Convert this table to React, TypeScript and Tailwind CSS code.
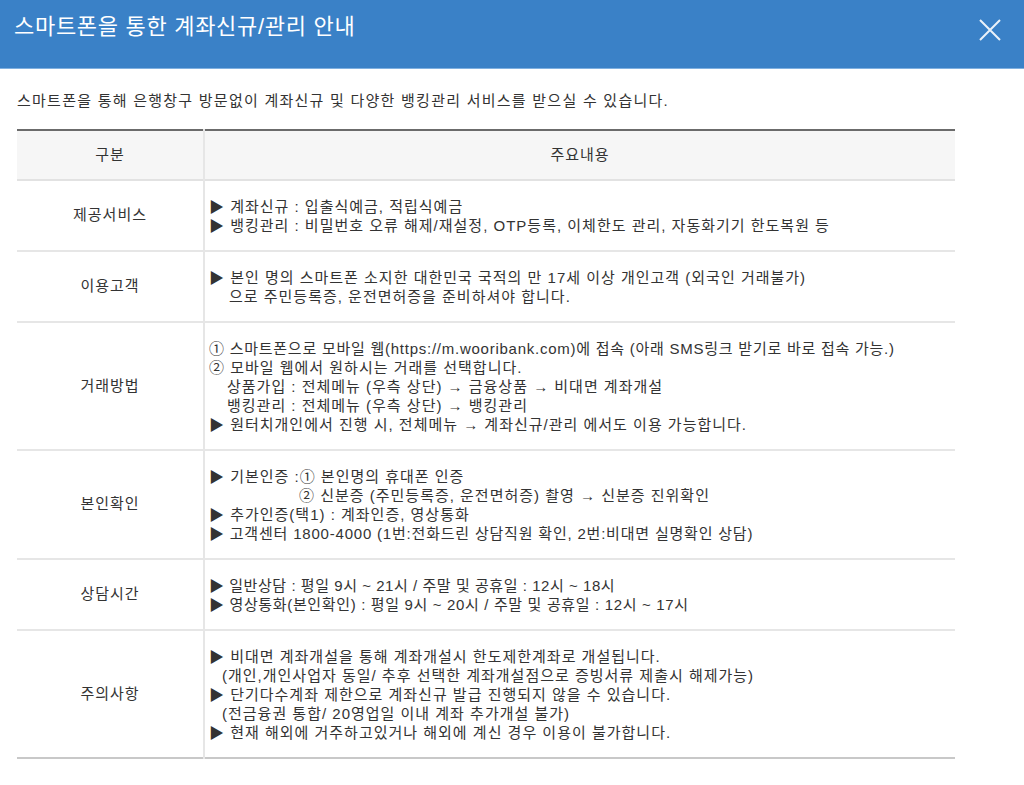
const font = "font-['Liberation_Sans','Noto_Sans_CJK_KR',sans-serif]";

type Line = { text: string; indent?: string };

type Row = {
  label: string;
  lines: Line[];
};

// lines with many latin letters / digits get a tighter tracking
const rows: Row[] = [
  {
    label: "제공서비스",
    lines: [
      { text: "▶ 계좌신규 : 입출식예금, 적립식예금" },
      { text: "▶ 뱅킹관리 : 비밀번호 오류 해제/재설정, OTP등록, 이체한도 관리, 자동화기기 한도복원 등" },
    ],
  },
  {
    label: "이용고객",
    lines: [
      { text: "▶ 본인 명의 스마트폰 소지한 대한민국 국적의 만 17세 이상 개인고객 (외국인 거래불가)" },
      { text: "으로 주민등록증, 운전면허증을 준비하셔야 합니다.", indent: "pl-[20px]" },
    ],
  },
  {
    label: "거래방법",
    lines: [
      {
        text: "① 스마트폰으로 모바일 웹(https://m.wooribank.com)에 접속 (아래 SMS링크 받기로 바로 접속 가능.)",
        indent: "tracking-[0.75px]",
      },
      { text: "② 모바일 웹에서 원하시는 거래를 선택합니다." },
      { text: "상품가입 : 전체메뉴 (우측 상단) → 금융상품 → 비대면 계좌개설", indent: "pl-[18px]" },
      { text: "뱅킹관리 : 전체메뉴 (우측 상단) → 뱅킹관리", indent: "pl-[18px]" },
      { text: "▶ 원터치개인에서 진행 시, 전체메뉴 → 계좌신규/관리 에서도 이용 가능합니다." },
    ],
  },
  {
    label: "본인확인",
    lines: [
      { text: "▶ 기본인증 :① 본인명의 휴대폰 인증" },
      { text: "② 신분증 (주민등록증, 운전면허증) 촬영 → 신분증 진위확인", indent: "pl-[90px]" },
      { text: "▶ 추가인증(택1) : 계좌인증, 영상통화" },
      {
        text: "▶ 고객센터 1800-4000 (1번:전화드린 상담직원 확인, 2번:비대면 실명확인 상담)",
        indent: "tracking-[0.8px]",
      },
    ],
  },
  {
    label: "상담시간",
    lines: [
      { text: "▶ 일반상담 : 평일 9시 ~ 21시 / 주말 및 공휴일 : 12시 ~ 18시", indent: "tracking-[0.55px]" },
      {
        text: "▶ 영상통화(본인확인) : 평일 9시 ~ 20시 / 주말 및 공휴일 : 12시 ~ 17시",
        indent: "tracking-[0.65px]",
      },
    ],
  },
  {
    label: "주의사항",
    lines: [
      { text: "▶ 비대면 계좌개설을 통해 계좌개설시 한도제한계좌로 개설됩니다." },
      { text: "(개인,개인사업자 동일/ 추후 선택한 계좌개설점으로 증빙서류 제출시 해제가능)", indent: "pl-[13px]" },
      { text: "▶ 단기다수계좌 제한으로 계좌신규 발급 진행되지 않을 수 있습니다." },
      { text: "(전금융권 통합/ 20영업일 이내 계좌 추가개설 불가)", indent: "pl-[13px]" },
      { text: "▶ 현재 해외에 거주하고있거나 해외에 계신 경우 이용이 불가합니다." },
    ],
  },
];

function CloseIcon() {
  return (
    <svg width="22" height="22" viewBox="0 0 22 22" className="text-white/90">
      <path d="M1 1 L21 21 M21 1 L1 21" stroke="currentColor" strokeWidth="2" fill="none" />
    </svg>
  );
}

export default function App() {
  return (
    <div className={`min-h-[785px] w-full bg-white ${font} text-[#333]`}>
      <header className="flex h-[69px] items-start justify-between border-b border-[#7fb0e0] bg-[#3a81c7] pl-[14px] pr-[23px]">
        <h1 className="pt-[12px] text-[22px] leading-[30px] tracking-[0.7px] text-white">
          스마트폰을 통한 계좌신규/관리 안내
        </h1>
        <button type="button" aria-label="닫기" className="mt-[19px]">
          <CloseIcon />
        </button>
      </header>

      <div className="px-[17px] pt-[22px] tracking-[1px]">
        <p className="text-[15px] leading-[20px] tracking-[1.25px]">
          스마트폰을 통해 은행창구 방문없이 계좌신규 및 다양한 뱅킹관리 서비스를 받으실 수 있습니다.
        </p>

        <table className="mt-[18px] w-[938px] border-collapse text-[15px]">
          <thead>
            <tr className="border-t-2 border-b-2 border-t-[#6b6b6b] border-b-[#e2e2e2] bg-[#f6f6f6]">
              <th className="h-[50px] w-[187px] border-r-2 border-[#e6e6e6] font-normal">구분</th>
              <th className="font-normal">주요내용</th>
            </tr>
          </thead>
          <tbody>
            {rows.map((row, index) => (
              <tr
                key={row.label}
                className={
                  index === rows.length - 1
                    ? "border-b-2 border-[#c8c8c8]"
                    : "border-b-2 border-[#e6e6e6]"
                }
              >
                <td className="border-r-2 border-[#e6e6e6] text-center">{row.label}</td>
                <td className="pt-[16px] pb-[15px] pl-[4px] leading-[19px]">
                  {row.lines.map((line) => (
                    <div key={line.text} className={line.indent}>
                      {line.text}
                    </div>
                  ))}
                </td>
              </tr>
            ))}
          </tbody>
        </table>
      </div>
    </div>
  );
}
